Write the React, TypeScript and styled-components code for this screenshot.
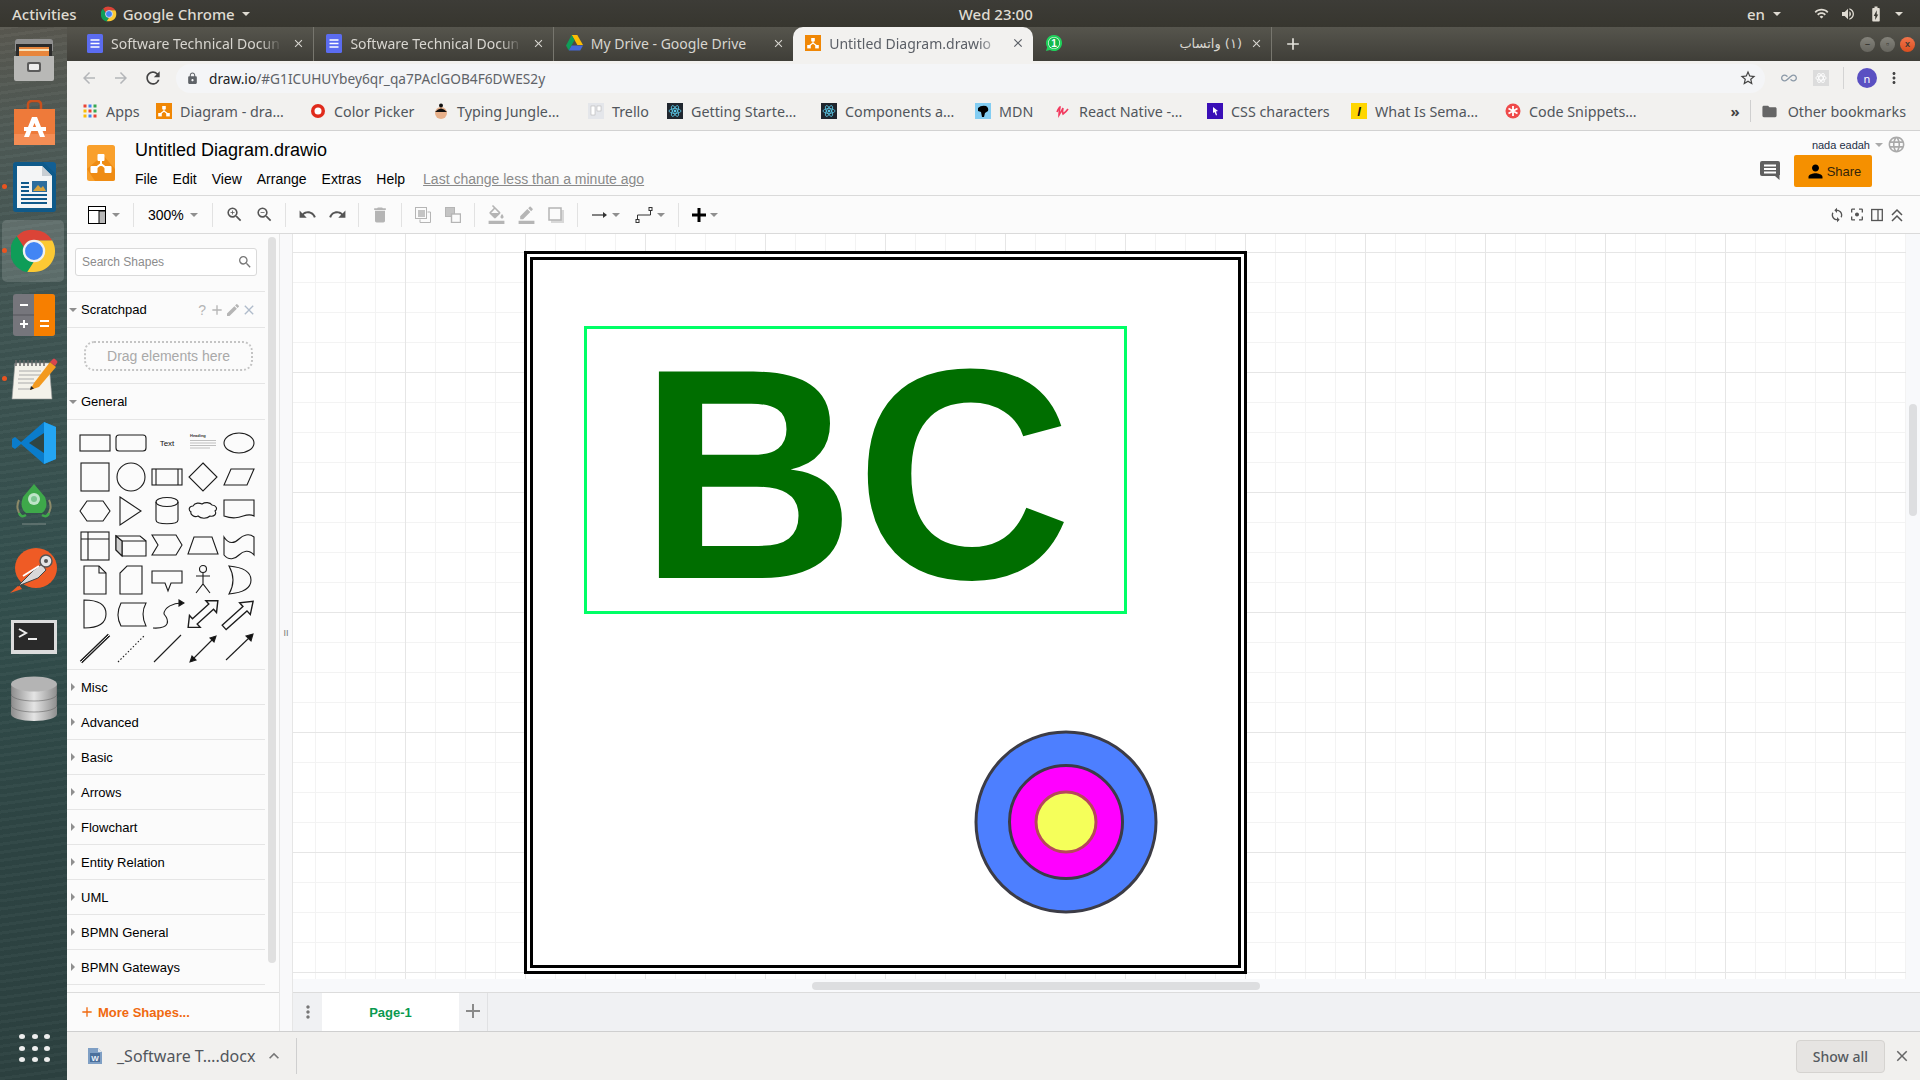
import * as React from 'react'
import styled, { createGlobalStyle } from 'styled-components'
import {
  MdAdd, MdAllInclusive, MdArrowBack, MdArrowForward, MdBatteryChargingFull, MdBorderColor, MdClose,
  MdDelete, MdFilterCenterFocus, MdFolder, MdFormatColorFill, MdLanguage, MdLock,
  MdMoreVert, MdPerson, MdRedo, MdRefresh, MdSearch, MdStarBorder, MdSync, MdUndo, MdVolumeUp, MdWifi, MdZoomIn,
  MdZoomOut, MdCreate, MdKeyboardArrowUp
} from 'react-icons/md'

const UBUNTU = `"Noto Sans", "DejaVu Sans", sans-serif`
const ARIAL = `"Liberation Sans", Arial, sans-serif`

const Global = createGlobalStyle`
  html, body { margin: 0; padding: 0; overflow: hidden; background: #2f4543; }
  * { box-sizing: border-box; }
`

const Screen = styled.div`
  width: 1920px;
  height: 1080px;
  display: flex;
  flex-direction: column;
  overflow: hidden;
  font-family: ${ARIAL};
`

/* ---------- ubuntu top bar ---------- */
const TopBar = styled.div`
  height: 27px;
  flex: none;
  display: flex;
  align-items: center;
  padding: 0 17px 0 12px;
  background: linear-gradient(#3d3c37, #37362f);
  color: #dfdbd2;
  font: 500 15px ${UBUNTU};
`
const BarLabel = styled.span<{ $left?: number }>`
  display: flex;
  align-items: center;
  margin-left: ${p => p.$left ?? 0}px;
  white-space: nowrap;
`
const Spacer = styled.div`
  flex: 1;
`
const Caret = styled.span<{ $color?: string; $size?: number; $left?: number }>`
  display: inline-block;
  flex: none;
  width: 0;
  height: 0;
  margin-left: ${p => p.$left ?? 0}px;
  border-left: ${p => p.$size ?? 4}px solid transparent;
  border-right: ${p => p.$size ?? 4}px solid transparent;
  border-top: ${p => p.$size ?? 4}px solid ${p => p.$color ?? '#8f8f8f'};
`
const SideCaret = styled.span`
  display: inline-block;
  flex: none;
  width: 0;
  height: 0;
  border-top: 4px solid transparent;
  border-bottom: 4px solid transparent;
  border-left: 4px solid #8f8f8f;
`

const Body = styled.div`
  flex: 1;
  display: flex;
  min-height: 0;
`

/* ---------- dock ---------- */
const Dock = styled.nav`
  width: 67px;
  flex: none;
  display: flex;
  flex-direction: column;
  background:
    repeating-linear-gradient(172deg, rgba(255,255,255,.022) 0 3px, rgba(0,0,0,.03) 3px 8px),
    linear-gradient(#5a5951 0, #4e5b57 120px, #3e5452 320px, #34504e 560px, #2e4544 820px, #2d4241 100%);
`
const DockItem = styled.div<{ $active?: boolean; $running?: boolean }>`
  position: relative;
  height: 64px;
  flex: none;
  display: flex;
  align-items: center;
  justify-content: center;
  &::before {
    content: '';
    position: absolute;
    left: 2px;
    right: 3px;
    top: 1px;
    bottom: 1px;
    border-radius: 5px;
    background: ${p => (p.$active ? 'rgba(255,255,255,.14)' : 'transparent')};
  }
  &::after {
    content: '';
    position: absolute;
    left: 2px;
    top: 29px;
    width: 5px;
    height: 5px;
    border-radius: 50%;
    background: ${p => (p.$running ? '#e95420' : 'transparent')};
  }
  svg { position: relative; }
`
const AppsDots = styled.div`
  margin: auto 0 18px 19px;
  display: grid;
  grid-template-columns: repeat(3, 6px);
  grid-auto-rows: 5px;
  column-gap: 6.5px;
  row-gap: 6.5px;
  span { background: #eee; border-radius: 50%; }
`

/* ---------- chrome ---------- */
const Main = styled.div`
  flex: 1;
  min-width: 0;
  display: flex;
  flex-direction: column;
`
const TabStrip = styled.div`
  height: 34px;
  flex: none;
  display: flex;
  align-items: stretch;
  padding-left: 8px;
  background: linear-gradient(#56554d, #3f3e38);
`
const Tab = styled.div<{ $active?: boolean; $sep?: boolean }>`
  position: relative;
  width: 239.4px;
  flex: none;
  display: flex;
  align-items: center;
  padding: 0 8px 2px 12px;
  gap: 8px;
  color: ${p => (p.$active ? '#5b5f66' : '#d8d6d0')};
  background: ${p => (p.$active ? '#f2f1ef' : 'transparent')};
  border-radius: ${p => (p.$active ? '10px 10px 0 0' : '0')};
  font: 400 14px ${UBUNTU};
  border-right: ${p => (p.$sep ? '1px solid #77766e' : '0')};
  background-clip: ${p => (p.$sep ? 'padding-box' : 'border-box')};
`
const TabTitle = styled.span<{ $rtl?: boolean; $fade?: boolean }>`
  flex: 1;
  min-width: 0;
  white-space: nowrap;
  text-align: ${p => (p.$rtl ? 'right' : 'left')};
  font-family: ${p => (p.$rtl ? '"DejaVu Sans", sans-serif' : UBUNTU)};
  font-size: ${p => (p.$rtl ? 13 : 14)}px;
  ${p => (p.$fade ? 'mask-image: linear-gradient(90deg, #000 86%, transparent 99%);' : '')}
`
const WindowButtons = styled.div`
  margin-left: auto;
  display: flex;
  align-items: center;
  gap: 5px;
  padding-right: 5px;
`
const WinBtn = styled.span<{ $close?: boolean }>`
  width: 15px;
  height: 15px;
  border-radius: 50%;
  display: flex;
  align-items: center;
  justify-content: center;
  color: #3a3a34;
  font: 700 9px ${ARIAL};
  background: ${p => (p.$close ? 'linear-gradient(#f2754c, #d94e1f)' : 'linear-gradient(#84837b, #66655e)')};
`
const NewTab = styled.div`
  display: flex;
  align-items: center;
  margin-left: 11px;
  color: #e4e2dc;
`

const UrlRow = styled.div`
  height: 34px;
  flex: none;
  display: flex;
  align-items: center;
  background: #f2f1ef;
  padding-left: 6px;
  color: #8a8d91;
`
const NavBtn = styled.span<{ $w?: number; $color?: string }>`
  width: ${p => p.$w ?? 32}px;
  flex: none;
  display: flex;
  align-items: center;
  justify-content: center;
  color: ${p => p.$color ?? 'inherit'};
`
const Omnibox = styled.div`
  width: 1589px;
  height: 29px;
  flex: none;
  margin-left: 7px;
  padding: 0 8px 0 10px;
  display: flex;
  align-items: center;
  border-radius: 15px;
  background: #f4f5f7;
  color: #5f6368;
  font: 400 13.7px ${UBUNTU};
  strong { font-weight: 400; color: #202124; }
`
const OmniText = styled.span`
  margin-left: 10px;
`
const StarSlot = styled.span`
  margin-left: auto;
  display: flex;
  color: #444;
`
const ExtBox = styled.span`
  width: 16px;
  height: 16px;
  display: flex;
  align-items: center;
  justify-content: center;
  background: #dcdcdc;
`
const Avatar = styled.span`
  width: 20px;
  height: 20px;
  margin-left: 27px;
  border-radius: 50%;
  background: #5a50c2;
  color: #fff;
  display: flex;
  align-items: center;
  justify-content: center;
  font: 400 11px ${UBUNTU};
`
const Divider = styled.span`
  width: 1px;
  height: 22px;
  margin-left: 14px;
  margin-right: -14px;
  background: #d4d4d4;
`

const Bookmarks = styled.div`
  height: 36px;
  flex: none;
  display: flex;
  align-items: center;
  padding: 0 0 3px 15px;
  background: #f2f1ef;
  border-bottom: 1px solid #d2d2d2;
  color: #51565c;
  font: 400 14.3px ${UBUNTU};
`
const Bookmark = styled.div<{ $w: number }>`
  width: ${p => p.$w}px;
  flex: none;
  display: flex;
  align-items: center;
  gap: 8px;
  white-space: nowrap;
`
const Favicon = styled.span<{ $bg?: string; $color?: string }>`
  width: 16px;
  height: 16px;
  flex: none;
  display: flex;
  align-items: center;
  justify-content: center;
  background: ${p => p.$bg ?? 'transparent'};
  color: ${p => p.$color ?? '#000'};
  font: italic 700 13px ${ARIAL};
`
const Overflow = styled.div`
  margin-left: auto;
  display: flex;
  align-items: center;
  gap: 10px;
  padding-right: 14px;
  color: #51565c;
`
const Chevrons = styled.span`
  color: #444;
  font: 700 15px ${UBUNTU};
`
const BarSep = styled.span`
  width: 1px;
  height: 22px;
  background: #cfcfcf;
`

/* ---------- draw.io header ---------- */
const AppHeader = styled.header`
  height: 65px;
  flex: none;
  display: flex;
  padding-left: 20px;
  background: #fbfbfb;
  border-bottom: 1px solid #dadada;
`
const LogoSlot = styled.div`
  width: 48px;
  flex: none;
  padding-top: 14px;
`
const TitleBlock = styled.div`
  display: flex;
  flex-direction: column;
`
const FileName = styled.div`
  margin-top: 8px;
  height: 23px;
  line-height: 23px;
  font-size: 18px;
  color: #000;
`
const MenuBar = styled.div`
  margin-top: 8px;
  display: flex;
  align-items: center;
  gap: 15px;
  font-size: 14px;
  line-height: 18px;
  color: #000;
`
const LastChange = styled.span`
  margin-left: 3px;
  color: #8a8a8a;
  text-decoration: underline;
`
const HeaderRight = styled.div`
  margin-left: auto;
  width: 170px;
  padding: 5px 14px 0 0;
  display: flex;
  flex-direction: column;
  align-items: flex-end;
`
const UserRow = styled.div`
  display: flex;
  align-items: center;
  height: 17px;
  color: #1d2f46;
  font-size: 11px;
`
const ShareRow = styled.div`
  margin-top: 2px;
  display: flex;
  align-items: center;
  padding-right: 34px;
  color: #5f5f5f;
`
const ShareButton = styled.div`
  width: 78px;
  height: 32px;
  margin-left: 14px;
  display: flex;
  align-items: center;
  justify-content: center;
  gap: 1px;
  border-radius: 2px;
  background: #f59000;
  color: #33240a;
  font-size: 13px;
`

/* ---------- draw.io toolbar ---------- */
const ToolBar = styled.div`
  height: 38px;
  flex: none;
  display: flex;
  align-items: center;
  padding-left: 14px;
  background: #fbfbfb;
  border-bottom: 1px solid #dadada;
  color: #555;
`
const ToolSep = styled.span`
  width: 1px;
  height: 24px;
  flex: none;
  background: #e2e2e2;
`
const ToolGroup = styled.div`
  display: flex;
  align-items: center;
  padding: 0 6px;
`
const ToolBtn = styled.div<{ $w?: number; $off?: boolean }>`
  width: ${p => p.$w ?? 30}px;
  height: 30px;
  flex: none;
  display: flex;
  align-items: center;
  justify-content: center;
  gap: 4px;
  color: ${p => (p.$off ? '#b5b5b5' : '#555')};
  font-size: 14px;
`
const LayoutBtn = styled(ToolBtn)`
  padding-right: 7px;
`
const ZoomValue = styled.div`
  width: 78px;
  flex: none;
  padding-left: 14px;
  display: flex;
  align-items: center;
  gap: 6px;
  color: #000;
  font-size: 14px;
`
const ToolRight = styled.div`
  margin-left: auto;
  padding-right: 15px;
  display: flex;
  align-items: center;
  gap: 4px;
  color: #555;
`
const SmallBtn = styled.span`
  width: 16px;
  height: 16px;
  display: flex;
  align-items: center;
  justify-content: center;
`

/* ---------- workspace ---------- */
const Workspace = styled.div`
  flex: 1;
  min-height: 0;
  display: flex;
`
const Sidebar = styled.aside`
  position: relative;
  width: 212px;
  flex: none;
  display: flex;
  flex-direction: column;
  background: #fbfbfb;
`
const SideScroll = styled.div`
  height: 758px;
  flex: none;
  overflow: hidden;
  padding-right: 14px;
`
const SearchWrap = styled.div`
  height: 58px;
  padding: 14px 0 0 8px;
  border-bottom: 1px solid #e5e5e5;
`
const SearchBox = styled.div`
  width: 182px;
  height: 28px;
  display: flex;
  align-items: center;
  justify-content: space-between;
  padding: 0 3px 0 6px;
  background: #fff;
  border: 1px solid #dadada;
  border-radius: 3px;
  color: #8c8c8c;
  font-size: 12px;
`
const SectionRow = styled.div<{ $h?: number }>`
  height: ${p => p.$h ?? 35}px;
  display: flex;
  align-items: center;
  gap: 4px;
  padding-left: 2px;
  border-bottom: 1px solid #e5e5e5;
  color: #000;
  font-size: 13px;
`
const ClosedRow = styled(SectionRow)`
  padding-left: 4px;
  gap: 6px;
`
const RowActions = styled.span`
  margin-left: auto;
  display: flex;
  align-items: center;
  padding-right: 8px;
  color: #b5b5b5;
`
const Help = styled.span`
  font-size: 14px;
  margin-right: 3px;
`
const DropWrap = styled.div`
  height: 56px;
  padding: 13px 0 0 17px;
  border-bottom: 1px solid #e5e5e5;
`
const DropZone = styled.div`
  width: 169px;
  height: 30px;
  display: flex;
  align-items: center;
  justify-content: center;
  border: 2px dotted #c4c4c4;
  border-radius: 10px;
  color: #a9a9a9;
  font-size: 14px;
`
const Palette = styled.div`
  height: 250px;
  padding: 6px 0 0 10px;
  display: grid;
  grid-template-columns: repeat(5, 36px);
  grid-auto-rows: 34.2px;
  align-content: start;
  border-bottom: 1px solid #e5e5e5;
`
const ThumbY = styled.div`
  position: absolute;
  left: 201px;
  top: 3px;
  width: 8px;
  height: 726px;
  border-radius: 4px;
  background: #e0e0e0;
`
const SideFooter = styled.div`
  flex: 1;
  display: flex;
  align-items: center;
  gap: 3px;
  padding-left: 12px;
  border-top: 1px solid #dcdcdc;
  color: #f0690f;
  font-size: 13px;
  font-weight: 700;
`
const Splitter = styled.div`
  width: 14px;
  flex: none;
  display: flex;
  align-items: center;
  justify-content: center;
  background: #f9f9fa;
  border-left: 1px solid #e6e6e6;
  border-right: 1px solid #e6e6e6;
  color: #777;
  font-size: 9px;
`
const CanvasColumn = styled.div`
  flex: 1;
  min-width: 0;
  display: flex;
  flex-direction: column;
`
const CanvasRow = styled.div`
  flex: 1;
  min-height: 0;
  display: flex;
`
const Canvas = styled.div`
  position: relative;
  flex: 1;
  overflow: hidden;
  background-color: #fff;
  background-image:
    linear-gradient(#e6e6e6 1px, transparent 1px),
    linear-gradient(90deg, #e6e6e6 1px, transparent 1px),
    linear-gradient(#f3f3f3 1px, transparent 1px),
    linear-gradient(90deg, #f3f3f3 1px, transparent 1px);
  background-size: 120px 120px, 120px 120px, 30px 30px, 30px 30px;
  background-position: 0 18px, 112px 0, 0 18px, 22px 0;
`
const ScrollGutterY = styled.div`
  position: relative;
  width: 14px;
  flex: none;
  background: #f8f9fb;
`
const ThumbRight = styled.div`
  position: absolute;
  left: 3px;
  top: 170px;
  width: 8px;
  height: 112px;
  border-radius: 4px;
  background: #dddee0;
`
const ScrollGutterX = styled.div`
  position: relative;
  height: 13px;
  flex: none;
  background: #f8f9fb;
`
const ThumbX = styled.div`
  position: absolute;
  left: 519px;
  top: 3px;
  width: 448px;
  height: 8px;
  border-radius: 4px;
  background: #dddee0;
`
const Frame = styled.div`
  position: absolute;
  left: 231px;
  top: 17px;
  width: 723px;
  height: 723px;
  background: #fff;
  border: 9px double #000;
`
const GreenBox = styled.div`
  position: absolute;
  left: 291px;
  top: 92px;
  width: 543px;
  height: 288px;
  display: flex;
  align-items: center;
  justify-content: center;
  border: 3px solid #00ff66;
  color: #006e00;
  font: 700 300px/1 ${ARIAL};
  padding: 8px 0 0 0;
`
const Target = styled.svg`
  position: absolute;
  left: 678px;
  top: 493px;
`
const PageBar = styled.div`
  height: 39px;
  flex: none;
  display: flex;
  align-items: stretch;
  background: #f0f1f3;
  border-top: 1px solid #dcdcdc;
  color: #8a8a8a;
`
const PageMenu = styled.div`
  width: 29px;
  display: flex;
  align-items: center;
  justify-content: center;
  color: #777;
`
const PageTab = styled.div`
  width: 137px;
  display: flex;
  align-items: center;
  justify-content: center;
  background: #fff;
  color: #0a9a50;
  font-size: 13px;
  font-weight: 700;
`
const PageAdd = styled.div`
  width: 29px;
  display: flex;
  align-items: center;
  justify-content: center;
  border-right: 1px solid #e0e1e3;
  padding-bottom: 3px;
`

/* ---------- download shelf ---------- */
const Shelf = styled.div`
  height: 49px;
  flex: none;
  display: flex;
  align-items: center;
  background: #f1f0ee;
  border-top: 1px solid #cfcfcf;
  color: #51565c;
  font: 400 16px ${UBUNTU};
`
const ShelfItem = styled.div`
  width: 230px;
  height: 36px;
  flex: none;
  display: flex;
  align-items: center;
  padding-left: 21px;
  border-right: 1px solid #cfcfcf;
`
const ShelfName = styled.span`
  margin-left: 15px;
  white-space: nowrap;
  width: 147px;
`
const ShowAll = styled.div`
  margin-left: auto;
  width: 89px;
  height: 33px;
  display: flex;
  align-items: center;
  justify-content: center;
  background: #e6e4e2;
  border: 1px solid #d5d3d0;
  border-radius: 4px;
  color: #555a60;
  font: 500 14px ${UBUNTU};
`
const ShelfClose = styled.span`
  margin: 0 9px 0 8px;
  display: flex;
  color: #666;
`

/* ---------- small drawings ---------- */
const ChromeLogo = ({ size }: { size: number }) => (
  <svg width={size} height={size} viewBox="0 0 48 48">
    <path d="M24 2a22 22 0 0 1 19 11H24a11 11 0 0 0-10.4 7.4L6 8.6A22 22 0 0 1 24 2z" fill="#db4437" />
    <path d="M6 8.6l7.6 11.8A11 11 0 0 0 24 35l-7 11.2A22 22 0 0 1 6 8.6z" fill="#0f9d58" />
    <path d="M43 13a22 22 0 0 1-19 33h-7l7-11a11 11 0 0 0 9-15.5 11 11 0 0 0-9-6.5z" fill="#fcc934" />
    <circle cx="24" cy="24" r="10.5" fill="#4285f4" stroke="#f1f1f1" strokeWidth="2.4" />
  </svg>
)

const DrawioGlyph = ({ size }: { size: number }) => (
  <svg width={size} height={size} viewBox="0 0 16 16">
    <rect width="16" height="16" fill="#f08705" />
    <path d="M8 6v3M4 11l4-3 4 3" stroke="#fff" strokeWidth="1.2" fill="none" />
    <rect x="6.2" y="3" width="3.6" height="3.4" fill="#fff" />
    <rect x="2.2" y="10" width="3.6" height="3.4" fill="#fff" />
    <rect x="10.2" y="10" width="3.6" height="3.4" fill="#fff" />
  </svg>
)

const DrawioLogo = () => (
  <svg width="28" height="36" viewBox="0 0 28 36">
    <rect width="28" height="36" rx="2.5" fill="#f9a02c" />
    <path d="M0 24l8 12h17.500q2.500 0 2.500-2.500V24L16 10z" fill="#ef8c14" />
    <path d="M14 14v7M7.500 24l6.500-5 6.500 5" stroke="#fff" strokeWidth="2" fill="none" />
    <rect x="10.500" y="9" width="7" height="7" rx="1" fill="#fff" />
    <rect x="3.500" y="21" width="7" height="7" rx="1" fill="#fff" />
    <rect x="17.500" y="21" width="7" height="7" rx="1" fill="#fff" />
  </svg>
)

const DocsIcon = () => (
  <svg width="16" height="19" viewBox="0 0 16 19">
    <rect width="16" height="19" rx="1.500" fill="#5b6cf0" />
    <path d="M3.500 6h9M3.500 9.500h9M3.500 13h9" stroke="#fff" strokeWidth="1.600" />
  </svg>
)

const DriveIcon = () => (
  <svg width="17" height="16" viewBox="0 0 17 16">
    <path d="M5.700 0h5.600l5.700 10h-5.600z" fill="#fbbc04" />
    <path d="M5.700 0l2.800 5-5.700 10.500L0 10.500z" fill="#0f9d58" />
    <path d="M5.600 10.500H17l-2.800 5H2.800z" fill="#4468d8" />
  </svg>
)

const WhatsApp = () => (
  <svg width="18" height="18" viewBox="0 0 18 18">
    <path d="M9 1a8 8 0 1 1-4 14.900L1 17l1.200-3.800A8 8 0 0 1 9 1z" fill="#1fd15b" />
    <circle cx="9" cy="9" r="6" fill="#fff" />
    <circle cx="9" cy="9" r="5.400" fill="#14b94a" />
    <text x="9" y="12.500" textAnchor="middle" fontSize="10" fontWeight="700" fontFamily={ARIAL} fill="#fff">1</text>
  </svg>
)

const AppsGrid = () => (
  <svg width="14" height="14" viewBox="0 0 14 14">
    {['#ea4335', '#4285f4', '#34a853', '#fbbc04', '#ea4335', '#34a853', '#fbbc04', '#4285f4', '#ea4335'].map((c, i) => (
      <rect key={i} x={(i % 3) * 5 + 0.5} y={Math.floor(i / 3) * 5 + 0.5} width="3" height="3" fill={c} />
    ))}
  </svg>
)

const ReactFav = () => (
  <Favicon $bg="#20262e">
    <svg width="14" height="14" viewBox="0 0 14 14" fill="none" stroke="#61dafb" strokeWidth=".7">
      <ellipse cx="7" cy="7" rx="6" ry="2.400" />
      <ellipse cx="7" cy="7" rx="6" ry="2.400" transform="rotate(60 7 7)" />
      <ellipse cx="7" cy="7" rx="6" ry="2.400" transform="rotate(120 7 7)" />
      <circle cx="7" cy="7" r="1" fill="#61dafb" />
    </svg>
  </Favicon>
)

const DockCabinet = () => (
  <svg width="44" height="46" viewBox="0 0 44 46">
    <path d="M3 6q0-3 3-3h32q3 0 3 3v9H3z" fill="#8f8f8f" />
    <rect x="4" y="8" width="36" height="16" fill="#2b2b2b" />
    <rect x="7" y="11" width="30" height="10" fill="#e8863c" />
    <path d="M7 14h30" stroke="#f7e0b8" strokeWidth="2" />
    <path d="M2 20h40v23q0 2-2 2H4q-2 0-2-2z" fill="#b8b8b6" />
    <rect x="15" y="26" width="14" height="10" rx="2" fill="#5b5b5b" />
    <rect x="17" y="28" width="10" height="6" rx="1" fill="#eee" />
  </svg>
)
const DockStore = () => (
  <svg width="44" height="46" viewBox="0 0 44 46">
    <path d="M16 10V5q0-4 4-4h5q4 0 4 4v5" fill="none" stroke="#c8501c" strokeWidth="2.500" />
    <path d="M2 9h41v36H2z" fill="#ee7a3a" />
    <path d="M2 34h41v11H2z" fill="#f48d54" />
    <path d="M20 17h5l8 20h-5l-5.500-14-5.500 14h-5z" fill="#fff" />
    <rect x="12" y="27" width="22" height="4" fill="#fff" />
  </svg>
)
const DockWriter = () => (
  <svg width="44" height="50" viewBox="0 0 44 50">
    <path d="M1 3q0-3 3-3h28l12 12v35q0 3-3 3H4q-3 0-3-3z" fill="#0f5a8a" />
    <path d="M31 0h10q3 0 3 3v9z" fill="#135f94" />
    <path d="M5 4h25l10 10v32H5z" fill="#f4f5f6" />
    <path d="M30 4v10h10z" fill="#c9ced3" />
    <rect x="20" y="19" width="15" height="11" fill="#2c6d9e" />
    <path d="M21 29l5-6 3 3 2-2 3 5z" fill="#d7a23d" />
    <path d="M9 21h8M9 25h8M9 29h8M9 33h26M9 37h26M9 41h26" stroke="#10598b" strokeWidth="2" />
  </svg>
)
const DockCalc = () => (
  <svg width="42" height="42" viewBox="0 0 42 42">
    <rect width="42" height="42" rx="3" fill="#76767c" />
    <path d="M21 0h18q3 0 3 3v36q0 3-3 3H21z" fill="#f77f00" />
    <path d="M0 21h21" stroke="#55555a" strokeWidth="1" />
    <path d="M7 11h8M7 30h8M11 26v8M27 27h9M27 32h9" stroke="#fff" strokeWidth="2" />
  </svg>
)
const DockNotes = () => (
  <svg width="48" height="46" viewBox="0 0 48 46">
    <path d="M5 7h34l3 36H2z" fill="#f4f2ea" stroke="#999" strokeWidth=".6" />
    <path d="M6 4v6M10 4v6M14 4v6M18 4v6M22 4v6M26 4v6M30 4v6M34 4v6" stroke="#666" strokeWidth="1.500" />
    <path d="M9 15h22M9 19h24M8 23h16M8 27h22M8 33h14" stroke="#aaa" strokeWidth="1" />
    <path d="M20 34l4-7L40 6l6 5-17 20z" fill="#f39a1f" />
    <path d="M40 6l3-3q1-1 2 0l2 2q1 1 0 2l-2 3z" fill="#d9444e" />
    <path d="M20 34l1-4 3 2.400z" fill="#222" />
  </svg>
)
const DockVSCode = () => (
  <svg width="44" height="42" viewBox="0 0 44 42">
    <path d="M32 0L9 20 3 15 0 17v8l3 2 6-5 23 20 12-5V5z" fill="#0a7ccb" />
    <path d="M32 11v20L17 21z" fill="#2f4543" />
    <path d="M32 0l12 5v32l-12 5z" fill="#24a5f3" />
  </svg>
)
const DockRocket = () => (
  <svg width="44" height="50" viewBox="0 0 44 50">
    <path d="M7 18q-4 8 2 16M37 18q4 8-2 16" fill="none" stroke="#8d8a68" strokeWidth="2" />
    <path d="M22 2l11 13q4 11-3 16H14q-7-5-3-16z" fill="#3ea84a" />
    <circle cx="22" cy="17" r="6" fill="#bfe5c8" />
    <circle cx="22" cy="17" r="3" fill="#7cc690" />
    <path d="M7 31q2 5 7 2M37 31q-2 5-7 2" fill="none" stroke="#3ea84a" strokeWidth="2.500" />
    <path d="M10 42h24" stroke="#7c8a86" strokeWidth="1" />
  </svg>
)
const DockPostman = () => (
  <svg width="48" height="46" viewBox="0 0 48 46">
    <ellipse cx="26" cy="20" rx="21" ry="20" fill="#ef5b25" />
    <path d="M0 45l12-4-3-4z" fill="#ef5b25" />
    <path d="M8 38L24 22l8-6 4 6-8 8z" fill="#d8d8d8" stroke="#444" strokeWidth="1" />
    <circle cx="36" cy="13" r="6" fill="#e4e4e4" stroke="#555" strokeWidth="1.500" />
    <circle cx="36" cy="13" r="2" fill="#555" />
    <path d="M13 28l16-10" stroke="#fff" strokeWidth="2" />
  </svg>
)
const DockTerminal = () => (
  <svg width="46" height="38" viewBox="0 0 46 38">
    <rect y="4" width="46" height="34" fill="#dcdcdc" />
    <rect x="3" y="7" width="40" height="27" fill="#2a2a2a" />
    <path d="M8 13l7 4-7 4" fill="none" stroke="#eee" strokeWidth="2" />
    <path d="M17 23h9" stroke="#eee" strokeWidth="2" />
  </svg>
)
const DockDb = () => (
  <svg width="46" height="46" viewBox="0 0 46 46">
    <defs>
      <linearGradient id="dbg" x1="0" x2="1" y1="0" y2="0">
        <stop offset="0" stopColor="#8c8c8c" />
        <stop offset=".5" stopColor="#e4e4e4" />
        <stop offset="1" stopColor="#8e8e8e" />
      </linearGradient>
    </defs>
    <path d="M0 30v8c0 4 10 7 23 7s23-3 23-7v-8z" fill="url(#dbg)" />
    <path d="M0 19v10c0 4 10 7 23 7s23-3 23-7V19z" fill="url(#dbg)" stroke="#666" strokeWidth=".6" />
    <path d="M0 8v10c0 4 10 7 23 7s23-3 23-7V8z" fill="url(#dbg)" stroke="#666" strokeWidth=".6" />
    <ellipse cx="23" cy="8" rx="23" ry="7.500" fill="#b4b4b4" />
  </svg>
)

const CommentIcon = () => (
  <svg width="20" height="20" viewBox="0 0 20 20">
    <path d="M2 0h16q2 0 2 2v12h-.500v5L15 15H2q-2 0-2-2V2q0-2 2-2z" fill="#5f5f5f" />
    <path d="M4 4.500h12M4 8h12M4 11.500h12" stroke="#fff" strokeWidth="1.800" />
  </svg>
)
const LayoutIcon = () => (
  <svg width="18" height="18" viewBox="0 0 18 18">
    <rect x=".5" y=".5" width="17" height="17" fill="#fff" stroke="#000" />
    <path d="M.5 4.500h17" stroke="#000" />
    <rect x="11" y="5" width="6.500" height="12.500" fill="#b8b8b8" stroke="#000" />
  </svg>
)
const ToFrontIcon = () => (
  <svg width="16" height="16" viewBox="0 0 16 16">
    <path d="M5 12.500v3h10.500V5h-3" fill="none" stroke="#b5b5b5" />
    <rect x=".5" y=".5" width="11" height="11" fill="#fbfbfb" stroke="#b5b5b5" />
    <rect x="3" y="3" width="7" height="7" fill="#c4c4c4" />
  </svg>
)
const ToBackIcon = () => (
  <svg width="16" height="16" viewBox="0 0 16 16">
    <rect x=".5" y=".5" width="9" height="9" fill="#c4c4c4" stroke="#b5b5b5" />
    <rect x="6.500" y="7" width="9" height="8.500" fill="#fbfbfb" stroke="#b5b5b5" strokeWidth="1.400" />
  </svg>
)
const ShadowIcon = () => (
  <svg width="16" height="16" viewBox="0 0 16 16">
    <rect x="3" y="3" width="13" height="13" fill="#d8d8d8" />
    <rect x="1" y="1" width="12" height="12" fill="#fbfbfb" stroke="#b5b5b5" strokeWidth="1.500" />
  </svg>
)
const ConnArrow = () => (
  <svg width="16" height="10" viewBox="0 0 16 10">
    <path d="M0 5h12" stroke="#333" strokeWidth="1.200" />
    <path d="M11 2l4 3-4 3z" fill="#333" />
  </svg>
)
const Waypoint = () => (
  <svg width="18" height="16" viewBox="0 0 18 16" fill="#fbfbfb" stroke="#333">
    <path d="M2.500 13V8h13V3" fill="none" />
    <rect x="1" y="12.500" width="3" height="3" />
    <rect x="14" y=".5" width="3" height="3" />
  </svg>
)
const ThickPlus = () => (
  <svg width="14" height="14" viewBox="0 0 14 14">
    <path d="M7 0v14M0 7h14" stroke="#000" strokeWidth="3" />
  </svg>
)
const CollapseIcon = () => (
  <svg width="14" height="14" viewBox="0 0 14 14" fill="none" stroke="#555" strokeWidth="1.500">
    <path d="M2 7l5-5 5 5M2 13l5-5 5 5" />
  </svg>
)
const PanelIcon = () => (
  <svg width="12" height="14" viewBox="0 0 12 14" fill="none" stroke="#555" strokeWidth="1.300">
    <rect x=".7" y="1.500" width="10.600" height="11" />
    <path d="M7 1.500v11" />
  </svg>
)
const WordIcon = () => (
  <svg width="14" height="16" viewBox="0 0 14 16">
    <path d="M0 0h10l4 4v12H0z" fill="#7f9fc4" />
    <path d="M10 0v4h4z" fill="#e4e8ee" />
    <rect x="2" y="5" width="10" height="9" fill="#4a6f9c" />
    <text x="7" y="12.500" textAnchor="middle" fontSize="8" fontWeight="700" fontFamily={ARIAL} fill="#eaf0f8">W</text>
  </svg>
)

/* ---------- palette ---------- */
const PaletteSvg = ({ children }: { children: React.ReactNode }) => (
  <svg width="36" height="34" viewBox="0 0 36 34" fill="none" stroke="#1c1c1c" strokeWidth="1.100">
    {children}
  </svg>
)
const shapes: React.ReactNode[] = [
  <rect x="3" y="9" width="30" height="16" />,
  <rect x="3" y="9" width="30" height="16" rx="3" />,
  <text x="18" y="20" textAnchor="middle" fontSize="8" fontFamily={ARIAL} fill="#111" stroke="none">Text</text>,
  <>
    <text x="5" y="11" fontSize="4" fontWeight="700" fontFamily={ARIAL} fill="#333" stroke="none">Heading</text>
    <path d="M5 14.500h26M5 17h26M5 19.500h26M5 22h20" stroke="#999" strokeWidth=".6" />
  </>,
  <ellipse cx="18" cy="17" rx="15" ry="10" />,

  <rect x="4" y="3" width="28" height="28" />,
  <circle cx="18" cy="17" r="14" />,
  <>
    <rect x="3" y="9" width="30" height="16" />
    <path d="M7 9v16M29 9v16" />
  </>,
  <path d="M18 3l14 14-14 14L4 17z" />,
  <path d="M3 25l7-16h23l-7 16z" />,

  <path d="M3 17l7-10h16l7 10-7 10H10z" />,
  <path d="M7 3l21 14L7 31z" />,
  <>
    <path d="M7 8v18c0 5 22 5 22 0V8" />
    <ellipse cx="18" cy="8" rx="11" ry="4.500" />
  </>,
  <path d="M8 12c2-4 7-3 9-2 3-2 8-2 10 1 4 0 6 4 3 6 2 3-1 6-5 5-3 3-9 3-12 0-4 2-8-2-7-4-3-2-2-6 2-6z" />,
  <path d="M3 6h30v16c-9-5-13 6-30 0z" />,

  <>
    <rect x="4" y="3" width="28" height="28" />
    <path d="M4 10h28M11 3v28" />
  </>,
  <>
    <path d="M3 7l6 5h24v15H9l-6-6z" />
    <path d="M3 7h24l6 5M9 12v15" />
    <path d="M3 7l6 5v15l-6-6z" fill="#cfcfcf" />
  </>,
  <path d="M3 6h24l6 10-6 10H3l6-10z" />,
  <path d="M9 8h18l6 17H3z" />,
  <path d="M3 8C8 16 14 14 18 10S28 4 33 8V26C28 20 22 22 18 26S8 32 3 26Z" />,

  <>
    <path d="M7 3h15l7 7v21H7z" />
    <path d="M22 3v7h7" />
  </>,
  <path d="M14 3h15v28H7V10z" />,
  <path d="M3 8h30v12H22l-3 8-3-8H3z" />,
  <>
    <circle cx="18" cy="6" r="3.500" />
    <path d="M18 10v11M11 13h14M11 30l7-9 7 9" />
  </>,
  <path d="M8 3q22 2 22 14t-22 14q8-14 0-28z" />,

  <path d="M7 3q22 0 22 14T7 31z" />,
  <path d="M8 6h25q-6 11 0 23H8q-6-11 0-23z" />,
  <>
    <path d="M4 31c18 1 16-8 11-14 0-7 10-11 17-11" />
    <path d="M30 3l5 3-5 3z" fill="#111" />
  </>,
  <path d="M-2 17l9-8v4.500h22V9l9 8-9 8v-4.500H7V25z" transform="rotate(-42 18 17)" strokeWidth="1.400" />,
  <path d="M-2 14h28V9l11 8-11 8v-5H-2z" transform="rotate(-42 18 17)" strokeWidth="1.400" />,

  <>
    <path d="M4 31L32 4" strokeWidth="3.400" />
    <path d="M4 31L32 4" stroke="#fff" strokeWidth="1" />
  </>,
  <path d="M5 31L32 4" strokeDasharray="1.500 2" />,
  <path d="M5 31L32 4" />,
  <>
    <path d="M8 28L28 8" />
    <path d="M5 31l2-6 4 4zM31 5l-2 6-4-4z" fill="#111" />
  </>,
  <>
    <path d="M5 29L29 6" />
    <path d="M32 3l-2 7-5-5z" fill="#111" />
  </>
]

const sections = ['Misc', 'Advanced', 'Basic', 'Arrows', 'Flowchart', 'Entity Relation', 'UML', 'BPMN General', 'BPMN Gateways']

type Mark = { name: string; w: number; icon: React.ReactNode }
const bookmarks: Mark[] = [
  { name: 'Apps', w: 74, icon: <Favicon><AppsGrid /></Favicon> },
  { name: 'Diagram - dra…', w: 154, icon: <DrawioGlyph size={16} /> },
  {
    name: 'Color Picker', w: 123,
    icon: (
      <Favicon>
        <svg width="16" height="16" viewBox="0 0 16 16"><circle cx="8" cy="8" r="7" fill="#e02b1c" /><circle cx="8" cy="8" r="3.500" fill="#fff" /></svg>
      </Favicon>
    )
  },
  {
    name: 'Typing Jungle…', w: 155,
    icon: (
      <Favicon>
        <svg width="16" height="16" viewBox="0 0 16 16"><circle cx="8" cy="10" r="6" fill="#e7b08a" /><path d="M2 9q6-7 12 0z" fill="#111" /><circle cx="8" cy="2.500" r="2" fill="#111" /></svg>
      </Favicon>
    )
  },
  {
    name: 'Trello', w: 79,
    icon: (
      <Favicon $bg="#e4e6ea">
        <svg width="12" height="12" viewBox="0 0 12 12"><rect x="1" y="1" width="4" height="9" fill="#fff" stroke="#aaa" strokeWidth=".5" /><rect x="7" y="1" width="4" height="5" fill="#fff" stroke="#aaa" strokeWidth=".5" /></svg>
      </Favicon>
    )
  },
  { name: 'Getting Starte…', w: 154, icon: <ReactFav /> },
  { name: 'Components a…', w: 154, icon: <ReactFav /> },
  {
    name: 'MDN', w: 80,
    icon: (
      <Favicon $bg="#83cdf2">
        <svg width="14" height="14" viewBox="0 0 14 14"><path d="M2 4q3-3 8-2 3 2 2 5l-3 2-1 4H6L5 8 2 7z" fill="#000" /></svg>
      </Favicon>
    )
  },
  {
    name: 'React Native -…', w: 152,
    icon: (
      <Favicon>
        <svg width="16" height="16" viewBox="0 0 16 16" fill="none" stroke="#f23a5f" strokeWidth="1.600"><path d="M2 9q2-5 3-5-1 5-1 8 3-5 4-7-1 4 0 6 3-2 5-5" /></svg>
      </Favicon>
    )
  },
  {
    name: 'CSS characters', w: 144,
    icon: (
      <Favicon $bg="#3a0fb7">
        <svg width="10" height="12" viewBox="0 0 10 12"><path d="M3 2l5 4-2 .5L7 10l-1 .5L4.500 7 3 8z" fill="#fff" /></svg>
      </Favicon>
    )
  },
  { name: 'What Is Sema…', w: 154, icon: <Favicon $bg="#ffd600" $color="#111">l</Favicon> },
  {
    name: 'Code Snippets…', w: 160,
    icon: (
      <Favicon>
        <svg width="16" height="16" viewBox="0 0 16 16"><circle cx="8" cy="8" r="7.500" fill="#ef4a4a" /><path d="M8 3v10M3.500 5.500l9 5M12.500 5.500l-9 5" stroke="#fff" strokeWidth="1.800" /></svg>
      </Favicon>
    )
  }
]

const dockApps: { icon: React.ReactNode; running?: boolean; active?: boolean }[] = [
  { icon: <DockCabinet /> },
  { icon: <DockStore /> },
  { icon: <DockWriter />, running: true },
  { icon: <ChromeLogo size={46} />, running: true, active: true },
  { icon: <DockCalc /> },
  { icon: <DockNotes />, running: true },
  { icon: <DockVSCode /> },
  { icon: <DockRocket /> },
  { icon: <DockPostman /> },
  { icon: <DockTerminal /> },
  { icon: <DockDb /> }
]

const App = () => (
  <Screen>
    <Global />
    <TopBar>
      <BarLabel>Activities</BarLabel>
      <BarLabel $left={24}><ChromeLogo size={16} /></BarLabel>
      <BarLabel $left={6}>Google Chrome</BarLabel>
      <Caret $color="#dfdbd2" $left={7} />
      <BarLabel $left={709}>Wed 23:00</BarLabel>
      <Spacer />
      <BarLabel>en</BarLabel>
      <Caret $color="#dfdbd2" $left={8} />
      <BarLabel $left={33}><MdWifi size={15} /></BarLabel>
      <BarLabel $left={11}><MdVolumeUp size={16} /></BarLabel>
      <BarLabel $left={11}><MdBatteryChargingFull size={18} /></BarLabel>
      <Caret $color="#dfdbd2" $left={10} />
    </TopBar>
    <Body>
      <Dock>
        {dockApps.map((a, i) => (
          <DockItem key={i} $running={a.running} $active={a.active}>{a.icon}</DockItem>
        ))}
        <AppsDots>
          {Array.from({ length: 9 }).map((_, i) => <span key={i} />)}
        </AppsDots>
      </Dock>
      <Main>
        <TabStrip>
          <Tab $sep>
            <DocsIcon />
            <TabTitle $fade>Software Technical Docun</TabTitle>
            <MdClose size={13} />
          </Tab>
          <Tab $sep>
            <DocsIcon />
            <TabTitle $fade>Software Technical Docun</TabTitle>
            <MdClose size={13} />
          </Tab>
          <Tab>
            <DriveIcon />
            <TabTitle>My Drive - Google Drive</TabTitle>
            <MdClose size={13} />
          </Tab>
          <Tab $active>
            <DrawioGlyph size={16} />
            <TabTitle $fade>Untitled Diagram.drawio</TabTitle>
            <MdClose size={14} />
          </Tab>
          <Tab $sep>
            <WhatsApp />
            <TabTitle $rtl dir="rtl">(١) واتساب</TabTitle>
            <MdClose size={13} />
          </Tab>
          <NewTab><MdAdd size={20} /></NewTab>
          <WindowButtons>
            <WinBtn>–</WinBtn>
            <WinBtn>▫</WinBtn>
            <WinBtn $close>x</WinBtn>
          </WindowButtons>
        </TabStrip>

        <UrlRow>
          <NavBtn $color="#b4b6b9"><MdArrowBack size={18} /></NavBtn>
          <NavBtn $color="#b4b6b9"><MdArrowForward size={18} /></NavBtn>
          <NavBtn $color="#444"><MdRefresh size={20} /></NavBtn>
          <Omnibox>
            <MdLock size={13} />
            <OmniText><strong>draw.io</strong>/#G1ICUHUYbey6qr_qa7PAclGOB4F6DWES2y</OmniText>
            <StarSlot><MdStarBorder size={18} /></StarSlot>
          </Omnibox>
          <NavBtn $w={48} $color="#8c9aa8"><MdAllInclusive size={16} /></NavBtn>
          <ExtBox>
            <svg width="12" height="14" viewBox="0 0 14 14" fill="none" stroke="#fff" strokeWidth="1">
              <ellipse cx="7" cy="7" rx="6" ry="2.400" />
              <ellipse cx="7" cy="7" rx="6" ry="2.400" transform="rotate(60 7 7)" />
              <ellipse cx="7" cy="7" rx="6" ry="2.400" transform="rotate(120 7 7)" />
            </svg>
          </ExtBox>
          <Divider />
          <Avatar>n</Avatar>
          <NavBtn $w={34} $color="#444"><MdMoreVert size={18} /></NavBtn>
        </UrlRow>

        <Bookmarks>
          {bookmarks.map(b => (
            <Bookmark key={b.name} $w={b.w}>
              {b.icon}
              <span>{b.name}</span>
            </Bookmark>
          ))}
          <Overflow>
            <Chevrons>»</Chevrons>
            <BarSep />
            <MdFolder size={17} color="#666" />
            <span>Other bookmarks</span>
          </Overflow>
        </Bookmarks>

        <AppHeader>
          <LogoSlot><DrawioLogo /></LogoSlot>
          <TitleBlock>
            <FileName>Untitled Diagram.drawio</FileName>
            <MenuBar>
              <span>File</span>
              <span>Edit</span>
              <span>View</span>
              <span>Arrange</span>
              <span>Extras</span>
              <span>Help</span>
              <LastChange>Last change less than a minute ago</LastChange>
            </MenuBar>
          </TitleBlock>
          <HeaderRight>
            <UserRow>
              nada eadah
              <Caret $left={5} $size={4} $color="#aaa" />
              <BarLabel $left={4}><MdLanguage size={19} color="#aaa" /></BarLabel>
            </UserRow>
            <ShareRow>
              <CommentIcon />
              <ShareButton><MdPerson size={21} color="#000" />Share</ShareButton>
            </ShareRow>
          </HeaderRight>
        </AppHeader>

        <ToolBar>
          <LayoutBtn $w={52}><LayoutIcon /><Caret $left={2} /></LayoutBtn>
          <ToolSep />
          <ZoomValue>300%<Caret /></ZoomValue>
          <ToolSep />
          <ToolGroup>
            <ToolBtn><MdZoomIn size={19} /></ToolBtn>
            <ToolBtn><MdZoomOut size={19} /></ToolBtn>
          </ToolGroup>
          <ToolSep />
          <ToolGroup>
            <ToolBtn><MdUndo size={19} /></ToolBtn>
            <ToolBtn><MdRedo size={19} /></ToolBtn>
          </ToolGroup>
          <ToolSep />
          <ToolGroup>
            <ToolBtn $off><MdDelete size={20} /></ToolBtn>
          </ToolGroup>
          <ToolSep />
          <ToolGroup>
            <ToolBtn $off><ToFrontIcon /></ToolBtn>
            <ToolBtn $off><ToBackIcon /></ToolBtn>
          </ToolGroup>
          <ToolSep />
          <ToolGroup>
            <ToolBtn $off><MdFormatColorFill size={19} /></ToolBtn>
            <ToolBtn $off><MdBorderColor size={19} /></ToolBtn>
            <ToolBtn $off><ShadowIcon /></ToolBtn>
          </ToolGroup>
          <ToolSep />
          <ToolGroup>
            <ToolBtn $w={44}><ConnArrow /><Caret /></ToolBtn>
            <ToolBtn $w={44}><Waypoint /><Caret /></ToolBtn>
          </ToolGroup>
          <ToolSep />
          <ToolGroup>
            <ToolBtn $w={40}><ThickPlus /><Caret /></ToolBtn>
          </ToolGroup>
          <ToolRight>
            <SmallBtn><MdSync size={16} /></SmallBtn>
            <SmallBtn><MdFilterCenterFocus size={17} /></SmallBtn>
            <SmallBtn><PanelIcon /></SmallBtn>
            <SmallBtn><CollapseIcon /></SmallBtn>
          </ToolRight>
        </ToolBar>

        <Workspace>
          <Sidebar>
            <SideScroll>
              <SearchWrap>
                <SearchBox>Search Shapes<MdSearch size={16} color="#777" /></SearchBox>
              </SearchWrap>
              <SectionRow $h={36}>
                <Caret />
                Scratchpad
                <RowActions>
                  <Help>?</Help>
                  <MdAdd size={16} />
                  <MdCreate size={16} />
                  <MdClose size={16} color="#b0bccb" />
                </RowActions>
              </SectionRow>
              <DropWrap><DropZone>Drag elements here</DropZone></DropWrap>
              <SectionRow $h={36}>
                <Caret />
                General
              </SectionRow>
              <Palette>
                {shapes.map((s, i) => <PaletteSvg key={i}>{s}</PaletteSvg>)}
              </Palette>
              {sections.map(s => (
                <ClosedRow key={s}><SideCaret />{s}</ClosedRow>
              ))}
            </SideScroll>
            <ThumbY />
            <SideFooter><MdAdd size={16} />More Shapes...</SideFooter>
          </Sidebar>
          <Splitter>II</Splitter>
          <CanvasColumn>
            <CanvasRow>
              <Canvas>
                <Frame />
                <GreenBox>BC</GreenBox>
                <Target width="190" height="190" viewBox="0 0 190 190">
                  <circle cx="95" cy="95" r="90" fill="#4d7fff" stroke="#3c3c46" strokeWidth="3" />
                  <circle cx="95" cy="95" r="56.500" fill="#ff00ff" stroke="#3c3c46" strokeWidth="3" />
                  <circle cx="95" cy="95" r="30" fill="#f5ff5a" stroke="#b5485a" strokeWidth="3" />
                </Target>
              </Canvas>
              <ScrollGutterY><ThumbRight /></ScrollGutterY>
            </CanvasRow>
            <ScrollGutterX><ThumbX /></ScrollGutterX>
            <PageBar>
              <PageMenu><MdMoreVert size={20} /></PageMenu>
              <PageTab>Page-1</PageTab>
              <PageAdd><MdAdd size={24} /></PageAdd>
            </PageBar>
          </CanvasColumn>
        </Workspace>

        <Shelf>
          <ShelfItem>
            <WordIcon />
            <ShelfName>_Software T….docx</ShelfName>
            <MdKeyboardArrowUp size={20} color="#777" />
          </ShelfItem>
          <ShowAll>Show all</ShowAll>
          <ShelfClose><MdClose size={18} /></ShelfClose>
        </Shelf>
      </Main>
    </Body>
  </Screen>
)

export default App
